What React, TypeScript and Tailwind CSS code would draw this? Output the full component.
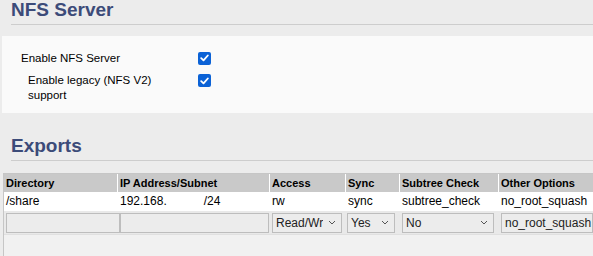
import React from 'react';

const Check = () => (
  <span className="flex h-[13px] w-[13px] items-center justify-center rounded-[2px] bg-[#0b62d6]">
    <svg width="9" height="8" viewBox="0 0 9 8" fill="none">
      <path d="M1.2 4.2 L3.5 6.4 L7.8 1.5" stroke="white" strokeWidth="1.8" strokeLinecap="round" strokeLinejoin="round" />
    </svg>
  </span>
);

const Chevron = () => (
  <svg width="8" height="5" viewBox="0 0 8 5" fill="none">
    <path d="M1 1 L4 4 L7 1" stroke="#555" strokeWidth="1" />
  </svg>
);

const Select = ({ value, width, textW }: { value: string; width: string; textW: string }) => (
  <div className={`flex h-[20px] ${width} items-center justify-between border border-[#bdbdbd] bg-[#ececec] pl-[3px] pr-[5px]`}>
    <span className={`${textW} overflow-hidden whitespace-nowrap`}>{value}</span>
    <Chevron />
  </div>
);

const cols = [
  { title: 'Directory', w: 'w-[113px]', value: '/share' },
  { title: 'IP Address/Subnet', w: 'w-[152px]', value: '192.168.1' },
  { title: 'Access', w: 'w-[76px]', value: 'rw' },
  { title: 'Sync', w: 'w-[54px]', value: 'sync' },
  { title: 'Subtree Check', w: 'w-[99px]', value: 'subtree_check' },
  { title: 'Other Options', w: 'flex-1', value: 'no_root_squash' },
];

export default function App() {
  return (
    <div className="h-[256px] w-[593px] overflow-hidden bg-[#ececec] text-black" style={{ fontFamily: '"Liberation Sans", Arial, sans-serif' }}>
      <div className="pl-[11px]">
        <h1 className="text-[19px] font-bold leading-[20px] text-[#3c4b79]">NFS Server</h1>
        <div className="mt-[4px] h-px bg-[#cdcdcd]" />
      </div>

      <div className="ml-[2px] mt-[11px] h-[77px] bg-[#fafafa] pt-[15px] text-[11.5px]">
        <div className="flex items-center">
          <span className="w-[196px] pl-[19px] leading-[14px]">Enable NFS Server</span>
          <Check />
        </div>
        <div className="mt-[8px] flex items-start">
          <span className="w-[196px] pl-[26px] leading-[15px]">Enable legacy (NFS V2)<br />support</span>
          <span className="mt-[1px]"><Check /></span>
        </div>
      </div>

      <div className="mt-[23px] pl-[11px]">
        <h2 className="text-[19px] font-bold leading-[20px] text-[#3c4b79]">Exports</h2>
        <div className="mt-[4px] h-px bg-[#cdcdcd]" />
      </div>

      <div className="ml-[3px] mt-[12px] h-[90px] border-l border-t border-[#c6c6c6] bg-[#f1f1f1] text-[12px]">
        <div className="flex h-[18px] bg-[#c9c9c9] text-[11px] font-bold">
          {cols.map((c, i) => (
            <div key={c.title} className={`${c.w} ${i > 0 ? 'border-l border-white' : ''} pl-[2px] leading-[18px] whitespace-nowrap`}>
              {c.title}
            </div>
          ))}
        </div>
        <div className="flex h-[19px] bg-white">
          {cols.map((c, i) => (
            <div key={c.title} className={`${c.w} ${i > 0 ? 'pl-[3px]' : 'pl-[2px]'} leading-[19px] whitespace-nowrap`}>
              {i === 1 ? (
                <span>192.168.<span className="inline-block w-[37px]" />/24</span>
              ) : (
                c.value
              )}
            </div>
          ))}
        </div>
        <div className="flex h-[24px] items-center border-b border-[#e0e0e0] bg-[#e9e9e9] text-[#222]">
          <div className="w-[113px] pl-[2px]">
            <div className="h-[20px] w-[114px] border border-[#bdbdbd] bg-[#ececec]" />
          </div>
          <div className="w-[152px] pl-[3px]">
            <div className="h-[20px] w-[149px] border border-[#bdbdbd] bg-[#ececec]" />
          </div>
          <div className="w-[76px] pl-[3px]">
            <Select value="Read/Write" width="w-[70px]" textW="w-[47px]" />
          </div>
          <div className="w-[54px] pl-[2px]">
            <Select value="Yes" width="w-[48px]" textW="w-[26px]" />
          </div>
          <div className="w-[99px] pl-[3px]">
            <Select value="No" width="w-[92px]" textW="w-[60px]" />
          </div>
          <div className="flex-1 pl-[3px]">
            <div className="flex h-[20px] items-center overflow-hidden whitespace-nowrap border border-[#bdbdbd] bg-[#ececec] pl-[3px]">no_root_squash</div>
          </div>
        </div>
      </div>
    </div>
  );
}
